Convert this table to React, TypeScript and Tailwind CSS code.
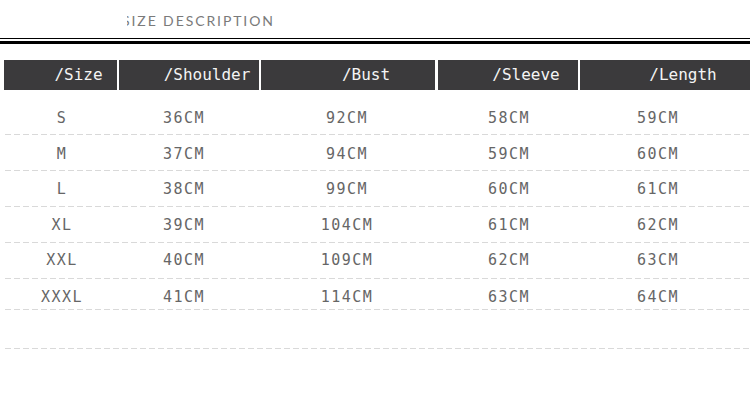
import React from "react";

const headers = [
  { label: "/Size", w: "w-[113px]" },
  { label: "/Shoulder", w: "w-[140px]" },
  { label: "/Bust", w: "w-[174px]" },
  { label: "/Sleeve", w: "w-[140px]" },
  { label: "/Length", w: "w-[170px]" },
];

const rows: { cells: string[]; h: string; pb: string }[] = [
  { cells: ["S", "36CM", "92CM", "58CM", "59CM"], h: "h-[44px]", pb: "pb-[8px]" },
  { cells: ["M", "37CM", "94CM", "59CM", "60CM"], h: "h-[35px]", pb: "pb-[8px]" },
  { cells: ["L", "38CM", "99CM", "60CM", "61CM"], h: "h-[35px]", pb: "pb-[9px]" },
  { cells: ["XL", "39CM", "104CM", "61CM", "62CM"], h: "h-[35px]", pb: "pb-[9px]" },
  { cells: ["XXL", "40CM", "109CM", "62CM", "63CM"], h: "h-[35px]", pb: "pb-[10px]" },
  { cells: ["XXXL", "41CM", "114CM", "63CM", "64CM"], h: "h-[30px]", pb: "pb-[4px]" },
  { cells: ["", "", "", "", ""], h: "h-[38px]", pb: "pb-[4px]" },
];

const colW = ["w-[116px]", "w-[128px]", "w-[198px]", "w-[126px]", "w-[172px]"];

function Dashed() {
  return (
    <div className="ml-[5px] h-px w-[745px] bg-[repeating-linear-gradient(to_right,#d9d9d9_0_6px,transparent_6px_9px)]" />
  );
}

export default function App() {
  return (
    <div className="w-[750px] h-[420px] bg-white overflow-hidden">
      <div className="h-[38px] pt-[13px] pl-[127px]">
        <div className="overflow-hidden">
          <div className="-ml-[5px] text-[14px] leading-[16px] tracking-[1.9px] text-[#7a7a7a] font-['Lato',sans-serif] whitespace-nowrap">
            SIZE DESCRIPTION
          </div>
        </div>
      </div>
      <div className="h-px bg-black" />
      <div className="h-[2px]" />
      <div className="h-[3px] bg-black" />
      <div className="h-[16px]" />
      <div className="flex ml-[4px] h-[30px]">
        {headers.map((h, i) => (
          <div
            key={h.label}
            className={`${h.w} ${i === 3 ? "ml-[3px]" : i > 0 ? "ml-[2px]" : ""} bg-[#3b3a3c] flex items-center justify-center pl-[36px] text-[#f4f4f4] text-[16px] leading-[18px] font-['DejaVu_Sans_Mono',monospace]`}
          >
            {h.label}
          </div>
        ))}
      </div>
      {rows.map((r, ri) => (
        <div key={ri}>
          <div className={`flex ml-[4px] items-end ${r.h} ${r.pb}`}>
            {r.cells.map((c, ci) => (
              <div
                key={ci}
                className={`${colW[ci]} text-center text-[15px] leading-[16px] tracking-[1.5px] text-[#666] font-['DejaVu_Sans_Mono',monospace]`}
              >
                {c}
              </div>
            ))}
          </div>
          <Dashed />
        </div>
      ))}
    </div>
  );
}
